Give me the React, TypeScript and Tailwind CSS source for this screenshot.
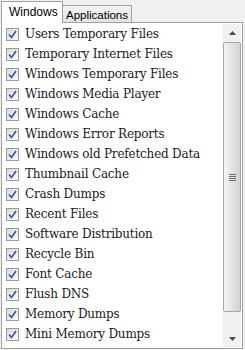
import { useState } from "react";

const items = [
  "Users Temporary Files",
  "Temporary Internet Files",
  "Windows Temporary Files",
  "Windows Media Player",
  "Windows Cache",
  "Windows Error Reports",
  "Windows old Prefetched Data",
  "Thumbnail Cache",
  "Crash Dumps",
  "Recent Files",
  "Software Distribution",
  "Recycle Bin",
  "Font Cache",
  "Flush DNS",
  "Memory Dumps",
  "Mini Memory Dumps",
];

function Check() {
  return (
    <span className="flex h-[13px] w-[13px] shrink-0 items-center justify-center border border-[#9a9a9a] bg-gradient-to-br from-[#dadada] to-[#fbfbfb]">
      <svg width="9" height="9" viewBox="0 0 9 9">
        <path d="M1 4.5 L3.5 7.5 L8 1" fill="none" stroke="#3553bf" strokeWidth="1.6" />
      </svg>
    </span>
  );
}

export default function App() {
  const [tab, setTab] = useState("Windows");

  return (
    <div className="flex h-[350px] w-[245px] flex-col bg-[#f0f0f0] pt-[1px] pl-[1px] pb-[1px]">
      {/* tabs */}
      <div className="flex h-[22px] items-end font-['Liberation_Sans',sans-serif] text-[12px] text-black">
        <button
          onClick={() => setTab("Windows")}
          className="relative z-10 h-[22px] w-[62px] border border-b-0 border-[#a0a0a0] bg-white pb-[2px] pl-[7px] text-left"
        >
          Windows
        </button>
        <button
          onClick={() => setTab("Applications")}
          className="h-[18px] w-[69px] border border-b-0 border-l-0 border-[#a0a0a0] bg-gradient-to-b from-[#f2f2f2] to-[#e3e3e3] pt-[1px] pl-[3px] text-left text-[11.5px] leading-[16px] whitespace-nowrap"
        >
          Applications
        </button>
      </div>

      {/* panel */}
      <div className="-mt-px flex w-[242px] flex-1 border border-[#a0a0a0] bg-white">
        <div className="flex-1 pt-[1px] pl-[4px] font-['DejaVu_Serif',serif] text-[12px] tracking-[-0.2px] text-[#1a1a1a]">
          {items.map((t) => (
            <div key={t} className="flex h-[20px] items-center gap-[6px]">
              <Check />
              <span className="whitespace-nowrap">{t}</span>
            </div>
          ))}
        </div>

        {/* scrollbar */}
        <div className="my-[1px] mr-[1px] flex w-[18px] flex-col bg-[#f0f0f0]">
          <div className="flex h-[17px] items-center justify-center">
            <svg width="7" height="4" viewBox="0 0 7 4">
              <path d="M0 4 L3.5 0 L7 4 Z" fill="#4a4a4a" />
            </svg>
          </div>
          <div className="mt-[1px] flex h-[270px] items-center justify-center rounded-[2px] border border-[#a7a7a7] bg-gradient-to-r from-[#f4f4f4] via-[#e4e4e4] to-[#d2d2d2]">
            <div className="flex flex-col gap-[1px]">
              <span className="block h-px w-[7px] bg-[#6a6a6a]" />
              <span className="block h-px w-[7px] bg-[#6a6a6a]" />
              <span className="block h-px w-[7px] bg-[#6a6a6a]" />
              <span className="block h-px w-[7px] bg-[#6a6a6a]" />
            </div>
          </div>
          <div className="flex-1" />
          <div className="flex h-[17px] items-center justify-center">
            <svg width="7" height="4" viewBox="0 0 7 4">
              <path d="M0 0 L3.5 4 L7 0 Z" fill="#4a4a4a" />
            </svg>
          </div>
        </div>
      </div>
    </div>
  );
}
